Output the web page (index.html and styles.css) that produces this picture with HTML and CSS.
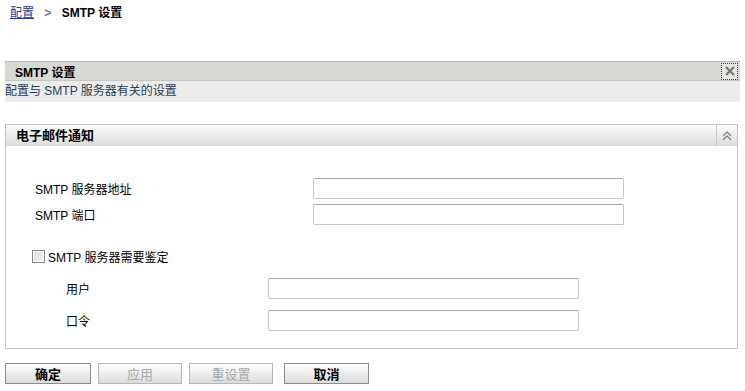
FILE: index.html
```html
<!DOCTYPE html>
<html lang="zh-CN">
<head>
  <meta charset="UTF-8">
  <title>SMTP 设置</title>
  <link rel="stylesheet" href="styles.css">
</head>
<body>
  <div class="crumbs">
    <a href="#">配置</a>
    <span class="sep">&gt;</span>
    <strong>SMTP 设置</strong>
  </div>

  <div class="info">
    <div class="info-head">
      <span>SMTP 设置</span>
      <button class="close" title="关闭">
        <svg width="12" height="12" viewBox="0 0 12 12"><path d="M2 2 L10 10 M10 2 L2 10" stroke="#777" stroke-width="2.2"/></svg>
      </button>
    </div>
    <div class="info-desc">配置与 SMTP 服务器有关的设置</div>
  </div>

  <div class="section">
    <div class="section-head">
      <span>电子邮件通知</span>
      <span class="collapse">
        <svg width="10" height="10" viewBox="0 0 10 10"><path d="M1 5 L5 1 L9 5 M1 9 L5 5 L9 9" stroke="#888" stroke-width="1.3" fill="none"/></svg>
      </span>
    </div>
    <div class="section-body">
      <div class="field">
        <label>SMTP 服务器地址</label>
        <input type="text">
      </div>
      <div class="field">
        <label>SMTP 端口</label>
        <input type="text">
      </div>
      <div class="check">
        <span class="box"></span>
        <span>SMTP 服务器需要鉴定</span>
      </div>
      <div class="field sub">
        <label>用户</label>
        <input type="text">
      </div>
      <div class="field sub">
        <label>口令</label>
        <input type="password">
      </div>
    </div>
  </div>

  <div class="buttons">
    <button class="btn">确定</button>
    <button class="btn off">应用</button>
    <button class="btn off">重设置</button>
    <button class="btn cancel">取消</button>
  </div>
</body>
</html>
```

FILE: styles.css
```css
body {
  margin: 0;
  padding: 0 5px;
  font-family: "Liberation Sans", "Noto Sans CJK SC", sans-serif;
  font-size: 12px;
  color: #000;
  background: #fff;
}
.crumbs {
  padding: 5px 0 0 5px;
  height: 16px;
  line-height: 16px;
}
.crumbs a {
  color: #1a3c8c;
}
.crumbs .sep {
  color: #777;
  font-weight: bold;
  margin: 0 7px;
}
.info {
  margin-top: 40px;
}
.info-head {
  display: flex;
  justify-content: space-between;
  align-items: center;
  height: 18px;
  background: #d8d9d3;
  border-top: 1px solid #b9bab4;
  padding-left: 10px;
  font-weight: bold;
}
.close {
  width: 17px;
  height: 17px;
  padding: 0;
  margin-right: 2px;
  border: 1px dotted #1c3d8f;
  background: #e6e6e3;
  display: flex;
  align-items: center;
  justify-content: center;
}
.info-desc {
  height: 21px;
  line-height: 21px;
  background: #ececea;
  border-top: 1px solid #c6c6c2;
  color: #253d60;
}
.section {
  margin-top: 22px;
  margin-right: 2px;
  border: 1px solid #c3c3c3;
  height: 223px;
}
.section-head {
  display: flex;
  justify-content: space-between;
  height: 21px;
  line-height: 21px;
  background: linear-gradient(#fafafa, #dcdcda);
  padding-left: 10px;
  font-weight: bold;
  font-size: 13px;
}
.collapse {
  width: 20px;
  border-left: 1px solid #c8c8c8;
  display: flex;
  align-items: center;
  justify-content: center;
}
.section-body {
  padding: 29px 0 0 29px;
}
.field {
  display: grid;
  grid-template-columns: 278px 311px;
  align-items: center;
  height: 26px;
}
.field.sub {
  grid-template-columns: 202px 311px;
  padding-left: 31px;
  height: 32px;
}
.field input {
  height: 21px;
  box-sizing: border-box;
  border: 1px solid #c8c8c8;
  border-top-color: #a8a8a8;
  border-radius: 2px;
  margin: 0;
}
.check {
  display: flex;
  align-items: center;
  gap: 3px;
  margin: 21px 0 8px -3px;
  height: 16px;
}
.check .box {
  width: 11px;
  height: 11px;
  border: 1px solid #888;
  background: linear-gradient(135deg, #dcdcdc, #f4f4f4);
  box-shadow: inset 0 0 0 1px #fff;
}
.buttons {
  display: flex;
  margin-top: 14px;
}
.btn {
  width: 86px;
  height: 21px;
  margin-right: 7px;
  padding: 0;
  border: 1px solid #8c8c8c;
  background: linear-gradient(#ffffff, #dcdcdc);
  font-family: inherit;
  font-size: 13px;
  font-weight: bold;
  color: #000;
}
.btn.off {
  width: 84px;
  color: #a8a8a8;
  font-weight: normal;
  border-color: #b8b8b8;
}
.btn.cancel {
  width: 85px;
  margin-left: 4px;
}
```
